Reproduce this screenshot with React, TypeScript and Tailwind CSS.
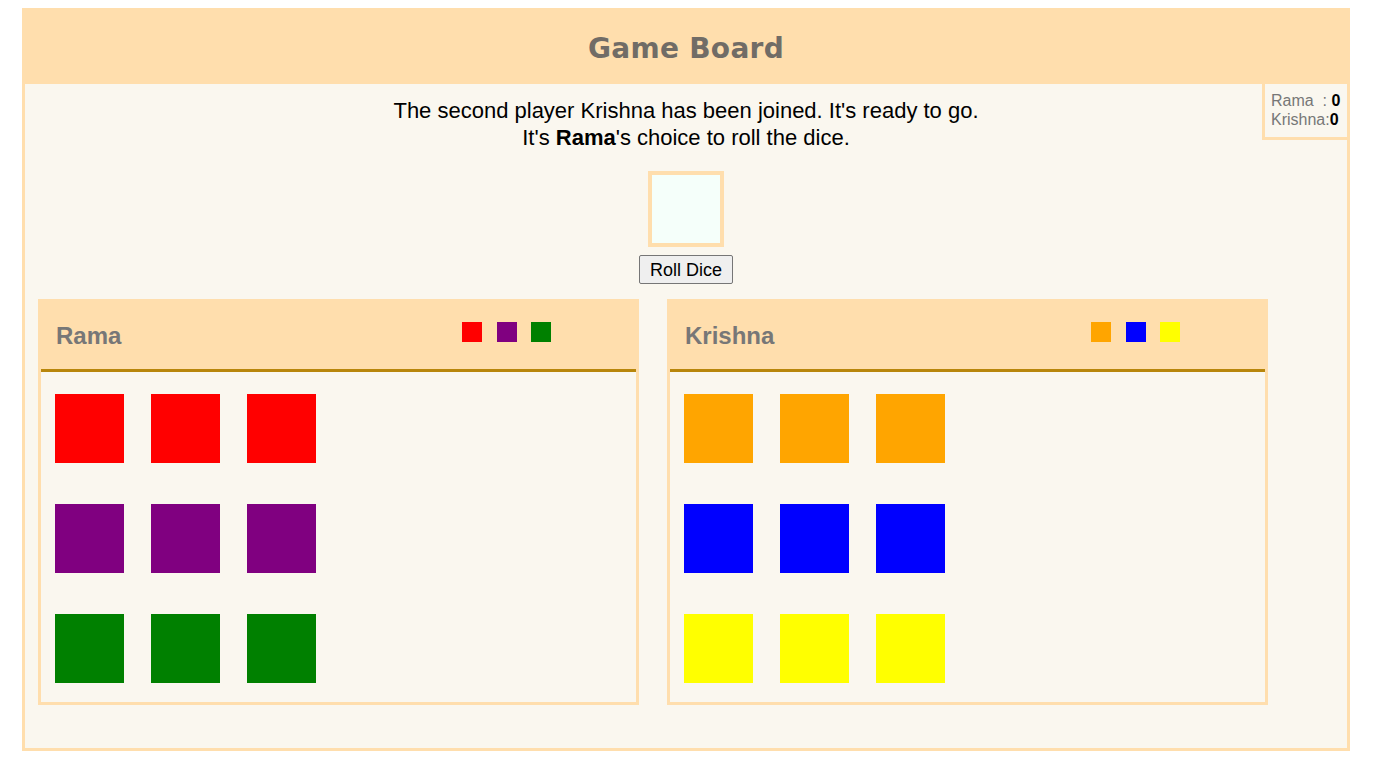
const players = [
  { name: 'Rama', colors: ['#ff0000', '#800080', '#008000'] },
  { name: 'Krishna', colors: ['#ffa500', '#0000ff', '#ffff00'] },
];

function PlayerPanel({ name, colors }: { name: string; colors: string[] }) {
  return (
    <div className="w-[601px] border-[3px] border-[#ffdead] bg-[#faf7ef]">
      <div className="flex h-[70px] items-start border-b-[3px] border-[#b8860b] bg-[#ffdead] pl-[15px]">
        <h2 className="w-[406px] pt-[20px] text-[24px] font-bold leading-[28px] text-[#777]">{name}</h2>
        <div className="flex gap-[14.5px] pt-[20px]">
          {colors.map((c) => (
            <div key={c} className="h-[20px] w-[20px]" style={{ backgroundColor: c }} />
          ))}
        </div>
      </div>
      <div className="flex flex-col gap-[41px] pb-[19px] pl-[14px] pt-[22px]">
        {colors.map((c) => (
          <div key={c} className="flex gap-[27px]">
            {[0, 1, 2].map((i) => (
              <div key={i} className="h-[69px] w-[69px]" style={{ backgroundColor: c }} />
            ))}
          </div>
        ))}
      </div>
    </div>
  );
}

export default function App() {
  return (
    <div className="min-h-screen bg-white pl-[22px] pt-[8px] font-['Liberation_Sans',Arial,sans-serif]">
      <div className="w-[1328px] border-[3px] border-t-0 border-[#ffdead] bg-[#faf7ef]">
        <div className="flex h-[76px] items-center justify-center bg-[#ffdead] pt-[6px]">
          <h1 className="font-['DejaVu_Sans',sans-serif] text-[28px] font-bold tracking-[0.3px] text-[#716c66]">
            Game Board
          </h1>
        </div>
        <div className="relative pb-[43px]">
          <div className="absolute right-0 top-0 w-[85px] border-b-[3px] border-l-[3px] border-[#ffdead] pb-[8px] pl-[6px] pt-[7px] text-[16px] leading-[19px] text-[#777]">
            <div>
              Rama&nbsp; : <b className="text-black">0</b>
            </div>
            <div>
              Krishna:<b className="text-black">0</b>
            </div>
          </div>
          <div className="pt-[13px] text-center text-[22px] leading-[27px] text-black">
            <p>The second player Krishna has been joined. It's ready to go.</p>
            <p>
              It's <b>Rama</b>'s choice to roll the dice.
            </p>
          </div>
          <div className="mt-[20px] flex flex-col items-center">
            <div className="h-[76px] w-[76px] border-[4px] border-[#ffdead] bg-[#f5fffa]" />
            <button className="mt-[8px] h-[29px] rounded-[2px] border border-[#767676] bg-[#efefef] px-[10px] text-[18px] leading-[20px] text-black">
              Roll Dice
            </button>
          </div>
          <div className="ml-[13px] mt-[15px] flex gap-[28px]">
            {players.map((p) => (
              <PlayerPanel key={p.name} name={p.name} colors={p.colors} />
            ))}
          </div>
        </div>
      </div>
    </div>
  );
}
